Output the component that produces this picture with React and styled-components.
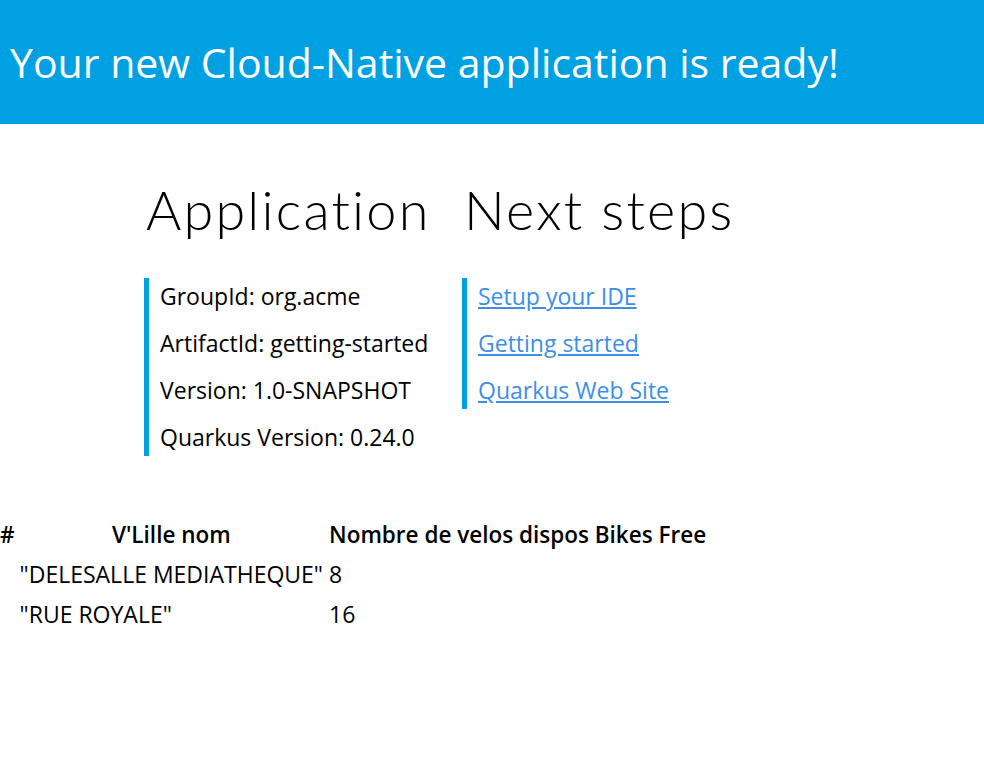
import React from 'react'
import styled, { createGlobalStyle } from 'styled-components'

const GlobalStyle = createGlobalStyle`
    body {
        margin: 0;
        background: #ffffff;
        font-family: 'Open Sans', 'Noto Sans', sans-serif;
        color: #000000;
    }
`

const appInfo = [
    'GroupId: org.acme',
    'ArtifactId: getting-started',
    'Version: 1.0-SNAPSHOT',
    'Quarkus Version: 0.24.0',
]

const nextSteps = [
    'Setup your IDE',
    'Getting started',
    'Quarkus Web Site',
]

const stations = [
    { name: '"DELESALLE MEDIATHEQUE"', free: 8 },
    { name: '"RUE ROYALE"', free: 16 },
]

const App = () => {
  return (
    <>
        <GlobalStyle />
        <Banner>Your new Cloud-Native application is ready!</Banner>
        <Container>
            <Column $width={318}>
                <Heading>Application</Heading>
                <InfoList>
                    {appInfo.map((item) => (
                        <li key={item}>{item}</li>
                    ))}
                </InfoList>
            </Column>
            <Column $width={378}>
                <Heading>Next steps</Heading>
                <InfoList>
                    {nextSteps.map((item) => (
                        <li key={item}><a href="#">{item}</a></li>
                    ))}
                </InfoList>
            </Column>
        </Container>
        <BikeTable>
            <thead>
                <tr>
                    <th>#</th>
                    <th>V'Lille nom</th>
                    <th>Nombre de velos dispos Bikes Free</th>
                </tr>
            </thead>
            <tbody>
                {stations.map((s) => (
                    <tr key={s.name}>
                        <td></td>
                        <td>{s.name}</td>
                        <td>{s.free}</td>
                    </tr>
                ))}
            </tbody>
        </BikeTable>
    </>
  )
}

const Banner = styled.h1`
    margin: 0;
    padding: 32px 10px;
    background-color: #00a1e2;
    color: #ffffff;
    font-family: 'Open Sans', sans-serif;
    font-weight: 400;
    font-size: 41px;
    line-height: 60px;
`;

const Container = styled.div`
    display: flex;
    justify-content: center;
    padding-top: 56px;
`;

const Column = styled.div`
    width: ${(p) => p.$width}px;
`;

const Heading = styled.h2`
    margin: 0 0 38px 0;
    padding-left: 2px;
    font-family: 'Lato', sans-serif;
    font-weight: 300;
    font-size: 54px;
    letter-spacing: 2.2px;
    line-height: 60px;
    color: #000000;
`;

const InfoList = styled.ul`
    list-style: none;
    margin: 0;
    padding: 0 0 0 11px;
    border-left: solid 5px #00a1e2;
    li {
        font-size: 23px;
        line-height: 37px;
        margin-bottom: 10px;
        &:last-child {
            margin-bottom: 0;
        }
    }
    a {
        color: #3d8fe6;
        text-decoration: underline;
    }
`;

const BikeTable = styled.table`
    margin-top: 58px;
    border-spacing: 0;
    font-family: 'Open Sans', sans-serif;
    font-size: 23px;
    th, td {
        padding: 0 3px;
        height: 40px;
    }
    th {
        font-size: 22.5px;
        font-weight: 600;
        text-align: center;
    }
    td {
        text-align: left;
    }
    th:first-child, td:first-child {
        padding: 0 2px 0 0;
    }
`;

export default App
